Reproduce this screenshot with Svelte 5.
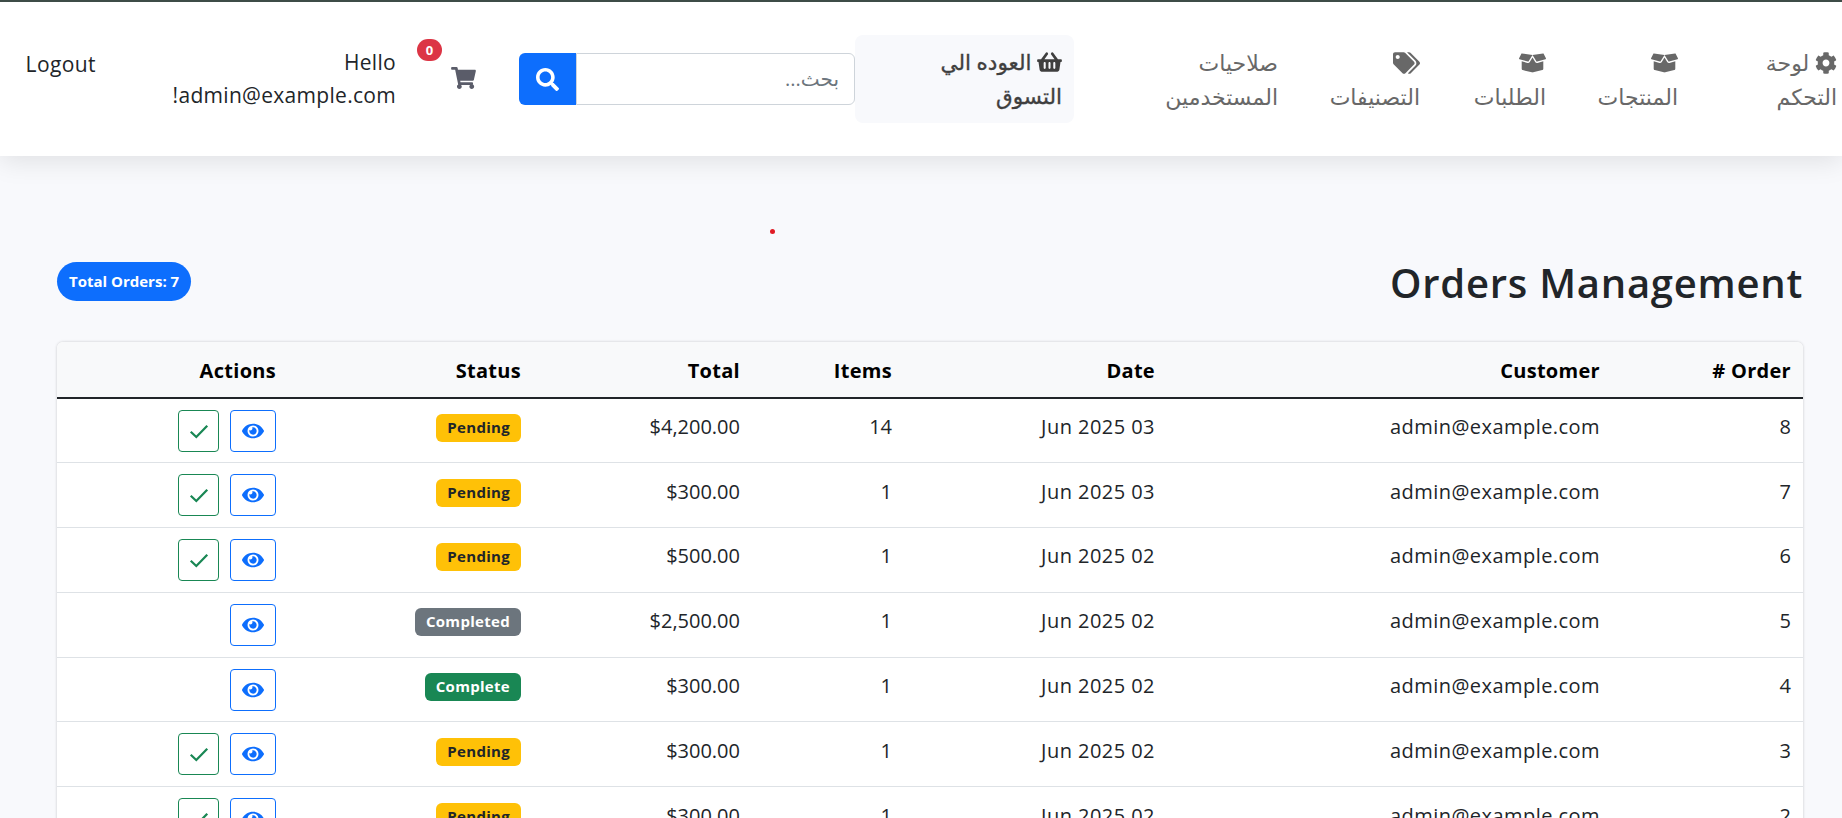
<script>
  const icons = {
    gear: { box: '0 0 512 512', d: 'M487.4 315.7l-42.6-24.6c4.3-23.2 4.3-47 0-70.2l42.6-24.6c4.9-2.8 7.1-8.6 5.5-14-11.1-35.6-30-67.8-54.7-94.6-3.8-4.1-10-5.1-14.8-2.3L380.8 110c-17.9-15.4-38.5-27.3-60.8-35.1V25.8c0-5.6-3.9-10.5-9.4-11.7-36.7-8.2-74.3-7.8-109.2 0-5.5 1.2-9.4 6.1-9.4 11.7V75c-22.2 7.9-42.8 19.8-60.8 35.1L88.7 85.5c-4.9-2.8-11-1.9-14.8 2.3-24.7 26.7-43.6 58.9-54.7 94.6-1.7 5.4.6 11.2 5.5 14L67.3 221c-4.3 23.2-4.3 47 0 70.2l-42.6 24.6c-4.9 2.8-7.1 8.6-5.5 14 11.1 35.6 30 67.8 54.7 94.6 3.8 4.1 10 5.1 14.8 2.3l42.6-24.6c17.9 15.4 38.5 27.3 60.8 35.1v49.2c0 5.6 3.9 10.5 9.4 11.7 36.7 8.2 74.3 7.8 109.2 0 5.5-1.2 9.4-6.1 9.4-11.7v-49.2c22.2-7.9 42.8-19.8 60.8-35.1l42.6 24.6c4.9 2.8 11 1.9 14.8-2.3 24.7-26.7 43.6-58.9 54.7-94.6 1.5-5.5-.7-11.3-5.6-14.1zM256 336c-44.1 0-80-35.9-80-80s35.9-80 80-80 80 35.9 80 80-35.9 80-80 80z' },
    box: { box: '0 0 640 512', d: 'M425.7 256c-16.9 0-32.8-9-41.4-23.4L320 126l-64.2 106.6c-8.7 14.5-24.6 23.5-41.5 23.5-4.5 0-9-.6-13.3-1.9L64 215v178c0 14.7 10 27.5 24.2 31l216.2 54.1c10.2 2.5 20.9 2.5 31 0L551.8 424c14.2-3.6 24.2-16.4 24.2-31V215l-137 39.1c-4.3 1.3-8.8 1.9-13.3 1.9zm212.6-112.2L586.8 41c-3.1-6.2-9.8-9.8-16.7-8.9L320 64l91.7 152.1c3.8 6.3 11.4 9.3 18.5 7.3l197.9-56.5c9.9-2.9 14.7-13.9 10.2-23.1zM53.2 41L1.7 143.8c-4.6 9.2.3 20.2 10.1 23l197.9 56.5c7.1 2 14.7-1 18.5-7.3L320 64 69.8 32.1c-6.9-.8-13.5 2.7-16.6 8.9z' },
    tags: { box: '0 0 640 512', d: 'M497.941 225.941L286.059 14.059A48 48 0 0 0 252.118 0H48C21.49 0 0 21.49 0 48v204.118a48 48 0 0 0 14.059 33.941l211.882 211.882c18.744 18.745 49.136 18.746 67.882 0l204.118-204.118c18.745-18.745 18.745-49.137 0-67.882zM112 160c-26.51 0-48-21.49-48-48s21.49-48 48-48 48 21.49 48 48-21.49 48-48 48zm513.941 133.823L421.823 497.941c-18.745 18.745-49.137 18.745-67.882 0l-.36-.36L527.64 323.522c16.999-16.999 26.36-39.6 26.36-63.64s-9.362-46.641-26.36-63.64L331.397 0h48.721a48 48 0 0 1 33.941 14.059l211.882 211.882c18.745 18.745 18.745 49.137 0 67.882z' },
    basket: { box: '0 0 576 512', d: 'M576 216v16c0 13.255-10.745 24-24 24h-8l-26.113 182.788C514.509 462.435 494.257 480 470.37 480H105.63c-23.887 0-44.139-17.565-47.518-41.212L32 256h-8c-13.255 0-24-10.745-24-24v-16c0-13.255 10.745-24 24-24h67.341l106.78-146.821c10.395-14.292 30.407-17.453 44.701-7.058 14.293 10.395 17.453 30.408 7.058 44.701L170.477 192h235.046L326.12 82.821c-10.395-14.292-7.234-34.306 7.059-44.701 14.291-10.395 34.306-7.235 44.701 7.058L484.659 192H552c13.255 0 24 10.745 24 24zM312 392V280c0-13.255-10.745-24-24-24s-24 10.745-24 24v112c0 13.255 10.745 24 24 24s24-10.745 24-24zm112 0V280c0-13.255-10.745-24-24-24s-24 10.745-24 24v112c0 13.255 10.745 24 24 24s24-10.745 24-24zm-224 0V280c0-13.255-10.745-24-24-24s-24 10.745-24 24v112c0 13.255 10.745 24 24 24s24-10.745 24-24z' },
    cart: { box: '0 0 576 512', d: 'M528.12 301.319l47.273-208C578.806 78.301 567.391 64 551.99 64H159.208l-9.166-44.81C147.758 8.021 137.93 0 126.529 0H24C10.745 0 0 10.745 0 24v16c0 13.255 10.745 24 24 24h69.883l70.248 343.435C147.325 417.1 136 435.222 136 456c0 30.928 25.072 56 56 56s56-25.072 56-56c0-15.674-6.447-29.835-16.824-40h209.647C430.447 426.165 424 440.326 424 456c0 30.928 25.072 56 56 56s56-25.072 56-56c0-22.172-12.888-41.332-31.579-50.405l5.517-24.276c3.413-15.018-8.002-29.319-23.403-29.319H218.117l-6.545-32h293.145c11.206 0 20.92-7.754 23.403-18.681z' },
    search: { box: '0 0 512 512', d: 'M505 442.7L405.3 343c-4.5-4.5-10.6-7-17-7H372c27.6-35.3 44-79.7 44-128C416 93.1 322.9 0 208 0S0 93.1 0 208s93.1 208 208 208c48.3 0 92.7-16.4 128-44v16.3c0 6.4 2.5 12.5 7 17l99.7 99.7c9.4 9.4 24.6 9.4 33.9 0l28.3-28.3c9.4-9.4 9.4-24.6.1-34zM208 336c-70.7 0-128-57.2-128-128 0-70.7 57.2-128 128-128 70.7 0 128 57.2 128 128 0 70.7-57.2 128-128 128z' },
    eye: { box: '0 0 576 512', d: 'M572.52 241.4C518.29 135.59 410.93 64 288 64S57.68 135.64 3.48 241.41a32.35 32.35 0 0 0 0 29.19C57.71 376.41 165.07 448 288 448s230.32-71.64 284.52-177.41a32.35 32.35 0 0 0 0-29.19zM288 400a144 144 0 1 1 144-144 143.93 143.93 0 0 1-144 144zm0-240a95.31 95.31 0 0 0-25.31 3.79 47.85 47.85 0 0 1-66.9 66.9A95.78 95.78 0 1 0 288 160z' }
  };

  const links = [
    { icon: 'gear', first: 'لوحة', second: 'التحكم' },
    { icon: 'box', first: '', second: 'المنتجات' },
    { icon: 'box', first: '', second: 'الطلبات' },
    { icon: 'tags', first: '', second: 'التصنيفات' },
    { icon: '', first: 'صلاحيات', second: 'المستخدمين' }
  ];

  const orders = [
    { id: 8, date: '03 Jun 2025', items: 14, total: '$4,200.00', status: 'Pending', kind: 'pending', approve: true },
    { id: 7, date: '03 Jun 2025', items: 1, total: '$300.00', status: 'Pending', kind: 'pending', approve: true },
    { id: 6, date: '02 Jun 2025', items: 1, total: '$500.00', status: 'Pending', kind: 'pending', approve: true },
    { id: 5, date: '02 Jun 2025', items: 1, total: '$2,500.00', status: 'Completed', kind: 'completed', approve: false },
    { id: 4, date: '02 Jun 2025', items: 1, total: '$300.00', status: 'Complete', kind: 'complete', approve: false },
    { id: 3, date: '02 Jun 2025', items: 1, total: '$300.00', status: 'Pending', kind: 'pending', approve: true },
    { id: 2, date: '02 Jun 2025', items: 1, total: '$300.00', status: 'Pending', kind: 'pending', approve: true }
  ];
</script>

{#snippet icon(name, cls)}
  <svg class={cls} viewBox={icons[name].box} aria-hidden="true"><path fill="currentColor" d={icons[name].d} /></svg>
{/snippet}

<div class="page" dir="rtl">
  <nav class="nav">
    {#each links as link}
      <a class="link" href="#top">
        {#if link.icon}{@render icon(link.icon, `nav-icon ${link.icon}`)}{/if}
        {link.first}<br />{link.second}
      </a>
    {/each}
    <a class="link back" href="#top">
      {@render icon('basket', 'nav-icon basket')}
      العوده الي<br />التسوق
    </a>
    <form class="search">
      <input type="text" placeholder="بحث..." />
      <button type="button" aria-label="بحث">{@render icon('search', 'search-icon')}</button>
    </form>
    <div class="cart">
      {@render icon('cart', 'cart-icon')}
      <span class="count">0</span>
    </div>
    <div class="user">Hello<br />admin@example.com!</div>
    <a class="logout" href="#top">Logout</a>
  </nav>

  <main class="main">
    <span class="dot"></span>
    <header class="head">
      <h1>Orders Management</h1>
      <span class="total">Total Orders: 7</span>
    </header>
    <div class="card">
      <table>
        <thead>
          <tr>
            <th>Order #</th>
            <th>Customer</th>
            <th>Date</th>
            <th>Items</th>
            <th>Total</th>
            <th>Status</th>
            <th>Actions</th>
          </tr>
        </thead>
        <tbody>
          {#each orders as order}
            <tr>
              <td>{order.id}</td>
              <td class="wide">admin@example.com</td>
              <td class="wide">{order.date}</td>
              <td>{order.items}</td>
              <td>{order.total}</td>
              <td><span class="badge {order.kind}">{order.status}</span></td>
              <td class="action-cell">
                <div class="actions">
                  <button class="act view" aria-label="View">{@render icon('eye', 'eye-icon')}</button>
                  {#if order.approve}
                    <button class="act ok" aria-label="Approve">
                      <svg class="check" viewBox="0 0 16 16" aria-hidden="true"><path d="M2.5 8.5 6.2 12 13.5 4.5" fill="none" stroke="currentColor" stroke-width="1.5" /></svg>
                    </button>
                  {/if}
                </div>
              </td>
            </tr>
          {/each}
        </tbody>
      </table>
    </div>
  </main>
</div>

<style>
  :global(html), :global(body) {
    margin: 0;
    height: 818px;
    overflow: hidden;
  }
  .page {
    height: 818px;
    overflow: hidden;
    background: #f8f9fc;
    color: #212529;
    font-family: "Open Sans", "DejaVu Sans", sans-serif;
    font-size: 20px;
    line-height: 30px;
  }
  .nav {
    box-sizing: border-box;
    height: 156px;
    padding-right: 5px;
    background: #fff;
    border-top: 2px solid #3e4c47;
    box-shadow: 0 5px 25px rgba(0, 0, 0, 0.1);
    display: grid;
    grid-template-columns: 159px 132px 126px 142px 204px 219px 336px 123px 300px 1fr;
    align-items: center;
  }
  .link {
    color: #686868;
    text-decoration: none;
    font-size: 22px;
    line-height: 34px;
    white-space: nowrap;
  }
  .back {
    box-sizing: border-box;
    height: 88px;
    padding: 10px 12px;
    background: #f8f9fc;
    border-radius: 8px;
    color: #3f3f3f;
    font-size: 21.5px;
    -webkit-text-stroke: 0.35px #3f3f3f;
  }
  .nav-icon {
    vertical-align: -3px;
    height: 22px;
    width: 27px;
  }
  .nav-icon.gear {
    width: 22px;
    height: 22px;
  }
  .nav-icon.basket {
    width: 25px;
    height: 22px;
  }
  .search {
    display: flex;
    height: 52px;
    margin: 0;
  }
  .search input {
    flex: 1;
    min-width: 0;
    box-sizing: border-box;
    padding: 0 15px;
    border: 1px solid #ced4da;
    border-radius: 0 6px 6px 0;
    font: inherit;
    color: #212529;
    background: #fff;
    outline: none;
  }
  .search input::placeholder {
    color: #6c757d;
  }
  .search button {
    width: 57px;
    border: 0;
    border-radius: 6px 0 0 6px;
    background: #0d6efd;
    color: #fff;
    padding: 0;
    display: grid;
    place-items: center;
  }
  .search-icon {
    width: 23px;
    height: 23px;
  }
  .cart {
    position: relative;
    height: 24px;
    padding-right: 43px;
    color: #5a5c69;
  }
  .cart-icon {
    display: block;
    width: 25px;
    height: 22px;
  }
  .count {
    position: absolute;
    top: -28px;
    right: 77px;
    min-width: 25px;
    height: 22px;
    border-radius: 11px;
    background: #dc3545;
    color: #fff;
    font-size: 13px;
    font-weight: 700;
    line-height: 22px;
    text-align: center;
  }
  .user {
    font-size: 21px;
    letter-spacing: 0.3px;
    line-height: 33px;
    color: #212529;
  }
  .logout {
    align-self: start;
    margin: 47px 0 0 26px;
    font-size: 21px;
    letter-spacing: 0.4px;
    color: #212529;
    text-decoration: none;
  }
  .main {
    position: relative;
    padding: 106px 39px 0 57px;
  }
  .dot {
    position: absolute;
    top: 73px;
    left: 770px;
    width: 5px;
    height: 5px;
    border-radius: 50%;
    background: #e01b24;
  }
  .head {
    display: flex;
    justify-content: space-between;
    align-items: flex-start;
    height: 80px;
  }
  h1 {
    margin: -3px 0 0;
    font-size: 40px;
    font-weight: 600;
    letter-spacing: 0.75px;
    line-height: 48px;
  }
  .total {
    padding: 0 12px;
    height: 39px;
    border-radius: 20px;
    background: #0d6efd;
    color: #fff;
    font-size: 15px;
    font-weight: 700;
    line-height: 39px;
    white-space: nowrap;
  }
  .card {
    background: #fff;
    border-radius: 6px;
    box-shadow: 0 0 3px rgba(0, 0, 0, 0.2);
    overflow: hidden;
  }
  table {
    width: 100%;
    table-layout: fixed;
    border-collapse: collapse;
  }
  th, td {
    padding: 0 12px;
    text-align: right;
  }
  th {
    height: 56px;
    padding-top: 2px;
    box-sizing: border-box;
    background: #f8f9fa;
    border-bottom: 2px solid #212529;
    color: #000;
    font-weight: 700;
    letter-spacing: 0.3px;
  }
  td {
    height: 64.8px;
    box-sizing: border-box;
    padding-bottom: 7px;
    border-bottom: 1px solid #dee2e6;
  }
  td.wide {
    letter-spacing: 0.45px;
  }
  td.action-cell {
    padding-bottom: 0;
  }
  th:nth-child(1) { width: 191px; }
  th:nth-child(2) { width: 445px; }
  th:nth-child(3) { width: 263px; }
  th:nth-child(4) { width: 152px; }
  th:nth-child(5) { width: 219px; }
  th:nth-child(6) { width: 245px; }
  .badge {
    display: inline-block;
    padding: 0 11px;
    height: 28px;
    border-radius: 6px;
    font-size: 15px;
    font-weight: 700;
    letter-spacing: 0.3px;
    line-height: 27px;
    vertical-align: 1px;
  }
  .pending { background: #ffc107; color: #212529; }
  .completed { background: #6c757d; color: #fff; }
  .complete { background: #198754; color: #fff; }
  .actions {
    display: flex;
    gap: 11px;
  }
  .act {
    height: 42px;
    padding: 0;
    background: transparent;
    border-radius: 4px;
    display: grid;
    place-items: center;
  }
  .view {
    width: 46px;
    border: 1px solid #0d6efd;
    color: #0d6efd;
  }
  .ok {
    width: 41px;
    border: 1px solid #198754;
    color: #198754;
  }
  .eye-icon {
    width: 22px;
    height: 20px;
  }
  .check {
    width: 24px;
    height: 24px;
  }
</style>
